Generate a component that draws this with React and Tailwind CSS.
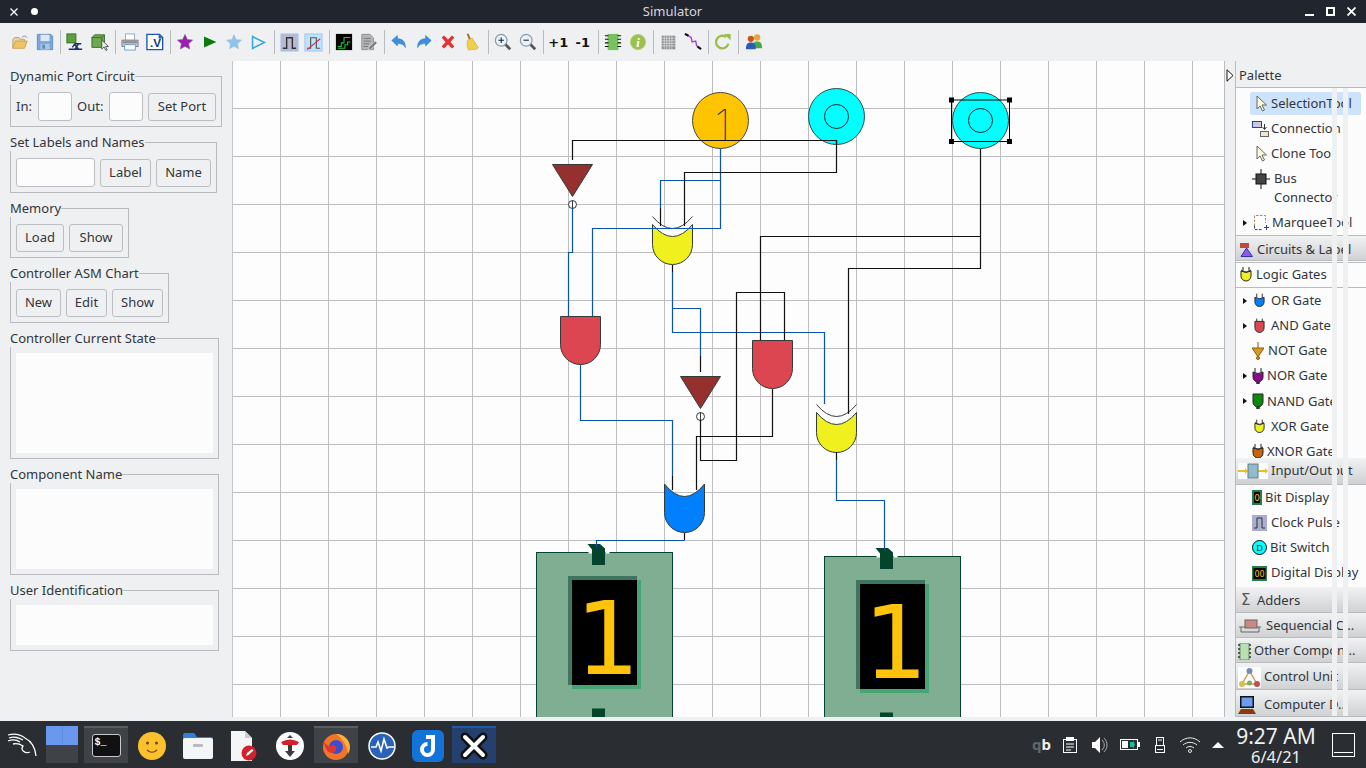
import React from "react";

const Sep = () => <div className="mx-[2.5px] h-[24px] w-px bg-[#b9bbbe]" />;

const Tool = ({ children }) => (
  <div className="flex h-[24px] w-[24.5px] items-center justify-center">{children}</div>
);

const Ico = ({ s = 18, children }) => (
  <svg width={s} height={s} viewBox="0 0 20 20">{children}</svg>
);

const star = "M10 1.5l2.6 5.6 6 .7-4.5 4.1 1.2 6L10 15l-5.3 2.9 1.2-6L1.400 7.800l6-.7z";

const toolbar = [
  [
    <Ico><path d="M2 17V7l2-2h5l1 2h5v3" fill="#e7d3a0" stroke="#b9a06a" /><path d="M2 17l3-8h13l-3 8z" fill="#eec468" stroke="#c9a04e" /><path d="M12 5c2-2 4-2 6 0" fill="none" stroke="#8a8a8a" /></Ico>,
    <Ico><path d="M1.500 1.500h15l2 2v15h-17z" fill="#7ba6d8" stroke="#5b8cc4" /><rect x="5" y="2" width="10" height="7" fill="#dbe8f5" /><rect x="5" y="12" width="10" height="6.500" fill="#a9c6e6" /><rect x="7" y="13" width="3" height="4.500" fill="#5b8cc4" /></Ico>,
  ],
  [
    <Ico><rect x="1" y="1" width="10" height="10" fill="#5ea13a" stroke="#2f6a20" /><path d="M7 16l3-4h7M3 18h15M9 12l5 6M14 12l-4 6" fill="none" stroke="#1f2f6b" strokeWidth="1.600" /></Ico>,
    <Ico><path d="M1 5l3-3h11v11l-3 3H1z" fill="#6fa84f" stroke="#3c6b2c" /><path d="M1 5h11v11M12 5l3-3" fill="none" stroke="#3c6b2c" /><path d="M12 8v10l2.500-2.500 2 4 1.500-.8-2-3.700h3.500z" fill="#eee" stroke="#555" /></Ico>,
  ],
  [
    <Ico><rect x="5" y="1" width="10" height="7" fill="#fff" stroke="#8fa8c4" /><path d="M1 8h18v7H1z" fill="#c9cbce" stroke="#777" /><rect x="2" y="9" width="16" height="2.500" fill="#8d9196" /><path d="M4 13h12v6H4z" fill="#fff" stroke="#5b9bd8" /></Ico>,
    <Ico><path d="M1 1.500h14l3.500 3.500v13.500H1z" fill="#fff" stroke="#1a56b0" strokeWidth="1.500" /><path d="M14 1.500l4.500 4.500h-4.500z" fill="#1a56b0" /><text x="4.500" y="15" fontSize="13" fontWeight="700" fontFamily="Liberation Sans" fill="#14367a">.V</text></Ico>,
  ],
  [
    <Ico><path d={star} fill="#9a1fb0" stroke="#6d6d6d" strokeWidth=".5" /></Ico>,
    <Ico s={16}><path d="M2.500 3L18 10 2.500 17z" fill="#0a7a0a" /></Ico>,
    <Ico><path d={star} fill="#8fc3ea" stroke="#b7c9d8" strokeWidth=".5" /></Ico>,
    <Ico s={17}><path d="M3 3L17 10 3 17z" fill="none" stroke="#36a9dc" strokeWidth="1.800" /></Ico>,
  ],
  [
    <Ico s={19}><rect x="1" y="1" width="18" height="18" fill="#b9b9d2" stroke="#9ec4f0" /><path d="M3 16h4V5h6v11h4" fill="none" stroke="#333" strokeWidth="1.500" /></Ico>,
    <Ico s={19}><rect x="1" y="1" width="18" height="18" fill="#bde3fb" stroke="#9ec4f0" /><path d="M3 16h4V5h6v11h4" fill="none" stroke="#555" strokeWidth="1.200" /><path d="M3.500 17.500L17 6" stroke="#e0303a" strokeWidth="1.200" /></Ico>,
  ],
  [
    <Ico><rect x="1" y="1" width="18" height="18" fill="#000" /><path d="M3 15h4v-4h3V5h7M3 17h8v-4h3v-3h3" fill="none" stroke="#22c33a" strokeWidth="1.200" /></Ico>,
    <Ico><path d="M2 1.500h9l4 4v13H2z" fill="#b5b6b8" stroke="#8a8b8d" /><path d="M4 6h8M4 9h8M4 12h6M4 15h5" stroke="#6f7072" /><path d="M10 16l7-7 2 2-7 7-3 1z" fill="#77787a" stroke="#eee" strokeWidth=".6" /></Ico>,
  ],
  [
    <Ico s={16}><path d="M1 8l7-6v4c6 0 10 3 10 11-2-4-5-5-10-5v3z" fill="#3f8fdc" stroke="#1f6bb5" strokeWidth=".6" /></Ico>,
    <Ico s={16}><path d="M19 8l-7-6v4C6 6 2 9 2 17c2-4 5-5 10-5v3z" fill="#3f8fdc" stroke="#1f6bb5" strokeWidth=".6" /></Ico>,
    <Ico s={16}><path d="M2 4.500L5 2l5 5 5-5 3 2.500-5 5.500 5 5.500-3 2.500-5-5-5 5-3-2.500 5-5.500z" fill="#e6322e" /></Ico>,
    <Ico><path d="M3 1l2-.500 3 7-2 1z" fill="#a86a2c" /><path d="M4 8l5-2.500 7 11-2 1.500-9 1c-2-4-2-8-1-11z" fill="#f0cf4e" stroke="#c9a32e" strokeWidth=".6" /></Ico>,
  ],
  [
    <Ico><path d="M12 12l6 6" stroke="#555" strokeWidth="3" /><circle cx="8" cy="8" r="6.500" fill="#e8f2fb" stroke="#8a9aa8" strokeWidth="1.300" /><path d="M5 8h6M8 5v6" stroke="#222" strokeWidth="1.200" /></Ico>,
    <Ico><path d="M12 12l6 6" stroke="#555" strokeWidth="3" /><circle cx="8" cy="8" r="6.500" fill="#e8f2fb" stroke="#8a9aa8" strokeWidth="1.300" /><path d="M5 8h6" stroke="#222" strokeWidth="1.200" /></Ico>,
  ],
  [
    <span className="font-['DejaVu_Sans'] text-[13px] font-bold leading-none text-[#111]">+1</span>,
    <span className="font-['DejaVu_Sans'] text-[13px] font-bold leading-none text-[#111]">-1</span>,
  ],
  [
    <Ico><rect x="4" y="1" width="12" height="18" fill="#76c25c" /><path d="M1 3h4M1 7h4M1 11h4M1 15h4M15 3h4M15 7h4M15 11h4M15 15h4" stroke="#111" strokeWidth="1.200" /></Ico>,
    <svg width="18" height="18" viewBox="0 0 20 20"><circle cx="10" cy="10" r="8.500" fill="#9cbf4f" stroke="#b8d47e" /><text x="10" y="15" textAnchor="middle" fontSize="14" fontWeight="700" fontStyle="italic" fontFamily="Liberation Serif" fill="#fff">i</text></svg>,
  ],
  [
    <Ico s={17}><path d="M2 2h16v16H2z" fill="#8f9092" /><path d="M2 5h16M2 8h16M2 11h16M2 14h16M5 2v16M8 2v16M11 2v16M14 2v16" stroke="#eee" strokeWidth=".7" /></Ico>,
    <Ico><path d="M3 2l5 3 1 5 4-1 1 5 3 3" fill="none" stroke="#a33be0" strokeWidth="1.500" /><path d="M1 1l4 2M15 15l4 3" stroke="#111" strokeWidth="2.400" /></Ico>,
  ],
  [
    <Ico><path d="M16 12a7 7 0 1 1-2.500-7.500" fill="none" stroke="#9cbc4a" strokeWidth="2.600" /><path d="M11 1h7.500v7z" fill="#9cbc4a" /></Ico>,
  ],
  [
    <Ico><circle cx="13.500" cy="5" r="3.500" fill="#f0a33a" /><path d="M8 17c0-6 2-7.500 5.500-7.500S19 11 19 17z" fill="#4aa84a" /><circle cx="6.500" cy="6.500" r="3.500" fill="#c9561e" /><path d="M1 18c0-6 2-7.500 5.500-7.500S12 12 12 18z" fill="#2e5bb8" /></Ico>,
  ],
];

const Btn = ({ w, children }) => (
  <button className={`flex h-[28px] items-center justify-center rounded-[3px] border border-[#bcbec1] bg-[#eff0f2] text-[13px] ${w}`}>
    {children}
  </button>
);

const Field = ({ className = "" }) => (
  <div className={`h-[29px] rounded-[3px] border border-[#bcbec1] bg-[#fcfcfc] ${className}`} />
);

const Group = ({ title, w, children }) => (
  <fieldset className={`border border-[#b9bbbe] ${w}`}>
    <legend className="-ml-px h-[18px] text-[13px] leading-[18px]">{title}</legend>
    {children}
  </fieldset>
);

const LeftPanel = () => (
  <div className="flex w-[233px] shrink-0 flex-col gap-[6px] border-r border-[#c4c6c9] pl-[10px] pt-[6px]">
    <Group title="Dynamic Port Circuit" w="w-[212px]">
      <div className="flex items-center gap-[5px] px-[5px] pb-[5px] pt-[7px] text-[13px]">
        <span className="w-[17px]">In:</span>
        <Field className="w-[34px]" />
        <span className="w-[27px]">Out:</span>
        <Field className="w-[34px]" />
        <Btn w="w-[68px]">Set Port</Btn>
      </div>
    </Group>
    <Group title="Set Labels and Names" w="w-[207px]">
      <div className="flex items-center gap-[5px] px-[5px] pb-[5px] pt-[7px]">
        <Field className="w-[79px]" />
        <Btn w="w-[51px]">Label</Btn>
        <Btn w="w-[55px]">Name</Btn>
      </div>
    </Group>
    <Group title="Memory" w="w-[119px]">
      <div className="flex h-[40px] items-start gap-[5px] px-[5px] pt-[7px] pb-[5px]">
        <Btn w="w-[48px]">Load</Btn>
        <Btn w="w-[54px]">Show</Btn>
      </div>
    </Group>
    <Group title="Controller ASM Chart" w="w-[159px]">
      <div className="flex h-[40px] items-start gap-[5px] px-[5px] pt-[7px] pb-[5px]">
        <Btn w="w-[45px]">New</Btn>
        <Btn w="w-[41px]">Edit</Btn>
        <Btn w="w-[51px]">Show</Btn>
      </div>
    </Group>
    <Group title="Controller Current State" w="w-[209px]">
      <div className="px-[5px] pb-[5px] pt-[6px]"><div className="h-[100px] bg-[#fcfcfc]" /></div>
    </Group>
    <Group title="Component Name" w="w-[209px]">
      <div className="px-[5px] pb-[5px] pt-[6px]"><div className="h-[80px] bg-[#fcfcfc]" /></div>
    </Group>
    <Group title="User Identification" w="w-[209px]">
      <div className="px-[5px] pb-[5px] pt-[6px]"><div className="h-[40px] bg-[#fcfcfc]" /></div>
    </Group>
  </div>
);

const GATE = "#333a3a";
const BLUE = "#0a52b4";

const Xor = ({ x, y }) => (
  <g stroke={GATE}>
    <path d={`M${x} ${y}Q${x + 20} ${y + 24} ${x + 40} ${y}V${y + 8}Q${x + 20} ${y + 32} ${x} ${y + 8}Z`} fill="#fdfdfd" stroke="none" />
    <path d={`M${x} ${y}Q${x + 20} ${y + 24} ${x + 40} ${y}`} fill="none" />
    <path d={`M${x} ${y + 8}Q${x + 20} ${y + 32} ${x + 40} ${y + 8}V${y + 28}A20 20 0 0 1 ${x} ${y + 28}Z`} fill="#f0f01e" />
  </g>
);

const And = ({ x, y }) => (
  <path d={`M${x} ${y}H${x + 40}V${y + 28}A20 20 0 0 1 ${x} ${y + 28}Z`} fill="#dc4650" stroke={GATE} />
);

const Not = ({ x, y }) => (
  <g stroke={GATE}>
    <path d={`M${x} ${y}H${x + 40}L${x + 20} ${y + 32}Z`} fill="#96302f" />
    <circle cx={x + 20} cy={y + 40} r="4" fill="#fdfdfd" />
    <path d={`M${x + 20} ${y + 36}V${y + 44}`} />
  </g>
);

const Display = ({ x, y }) => (
  <g>
    <rect x={x} y={y} width="136" height="190" fill="#7fae93" stroke="#04442c" />
    <path d={`M${x + 52} ${y}h3.500M${x + 69} ${y}h4`} stroke="#fdfdfd" strokeWidth="2" />
    <path d={`M${x + 51} ${y - 8.500}H${x + 63.500}L${x + 68.500} ${y - 4}V${y + 12.500}H${x + 55.500}V${y - 3}Z`} fill="#04442c" />
    <rect x={x + 55.500} y={y + 156} width="13" height="30" fill="#04442c" />
    <rect x={x + 35.500} y={y + 27.500} width="69" height="109" fill="#46a573" />
    <rect x={x + 31.500} y={y + 23.500} width="69" height="109" fill="#3f7660" />
    <rect x={x + 35.500} y={y + 27.500} width="65" height="105" fill="#000" />
    <text x={x + 39} y={y + 121.500} fontSize="101" fontFamily="DejaVu Sans" fill="#ffc30b">1</text>
  </g>
);

const Canvas = () => (
  <svg className="block h-[656px] w-[991px] shrink-0" viewBox="233 61 991 656">
    <defs>
      <pattern id="grid" x="280" y="108" width="48" height="48" patternUnits="userSpaceOnUse">
        <path d="M.5 0V48M0 .5H48" fill="none" stroke="#bebebe" />
      </pattern>
    </defs>
    <rect x="233" y="61" width="991" height="656" fill="#fdfdfd" />
    <rect x="233" y="61" width="991" height="656" fill="url(#grid)" />

    <circle cx="720.500" cy="120.500" r="28" fill="#ffc400" stroke="#4a4a3a" />
    <text x="722.500" y="140.500" textAnchor="middle" fontSize="44" fontWeight="100" fontFamily="Inter" fill="#111c33">1</text>
    <circle cx="836.500" cy="116.500" r="28" fill="#00ffff" stroke="#2a4a4a" />
    <circle cx="836.500" cy="116.500" r="12" fill="none" stroke="#1a2a2a" />
    <circle cx="980.500" cy="120.500" r="28" fill="#00ffff" stroke="#2a4a4a" />
    <circle cx="980.500" cy="120.500" r="12" fill="none" stroke="#1a2a2a" />

    <Not x={552.5} y={164.5} />
    <Not x={680.5} y={376.5} />
    <And x={560.5} y={316.5} />
    <And x={752.5} y={340.5} />
    <Xor x={652.5} y={216.5} />
    <Xor x={816.5} y={404.5} />
    <path d="M664.500 484Q684.500 509 704.500 484V512.500A20 20 0 0 1 664.500 512.500Z" fill="#0080ff" stroke={GATE} />

    <Display x={536.5} y={552.5} />
    <Display x={824.5} y={556.5} />

    <g fill="none" stroke={BLUE} strokeWidth="1.200">
      <path d="M720.500 148.500V228.500H592.500V316" />
      <path d="M720.500 180.500H660.500V208" />
      <path d="M572.500 208V252.500H568.500V316" />
      <path d="M580.500 365V420.500H672.500V476" />
      <path d="M672.500 272V332.500H824.500V404" />
      <path d="M672.500 308.500H700.500V356" />
      <path d="M684.500 540.500H596.500V547" />
      <path d="M836.500 460V500.500H884.500V550" />
    </g>
    <g fill="none" stroke="#111" strokeWidth="1.200">
      <path d="M572.500 160V140.500H836.500V172.500H684.500V226" />
      <path d="M836.500 140V144" />
      <path d="M660.500 208V226M672.500 265V272" />
      <path d="M980.500 149V268.500H848.500V414" />
      <path d="M980.500 236.500H760.500V340" />
      <path d="M784.500 340V292.500H736.500V460.500H700.500V420" />
      <path d="M772.500 389V436.500H696.500V490" />
      <path d="M700.500 356V372" />
      <path d="M672.500 476V490M684.500 533V540M836.500 452V460" />
    </g>

    <path d="M951.500 100V141.500H1009.500V100Z" fill="none" stroke="#000" />
    <g fill="#000">
      <rect x="949" y="97.500" width="5" height="5" />
      <rect x="1007" y="97.500" width="5" height="5" />
      <rect x="949" y="139" width="5" height="5" />
      <rect x="1007" y="139" width="5" height="5" />
    </g>
  </svg>
);

const Cursor = () => (
  <svg width="11" height="17" viewBox="0 0 11 17"><path d="M1 1v13l3-3 2.500 5 2-1-2.500-5h4.500z" fill="#fff8d8" stroke="#666" /></svg>
);

const GateIco = ({ fill, w = 11, bubble, cross }) => (
  <svg width={w} height="16" viewBox="0 0 12 16">
    <path d="M3 0v4M9 0v4" stroke="#222" />
    {cross && <path d="M1 3q5 4 10 0" fill="none" stroke="#222" />}
    <path d="M1 4q5 3 10 0v5a5 5 0 0 1-10 0z" fill={fill} stroke="#222" />
    {bubble && <circle cx="6" cy="15" r="1.300" fill={fill} stroke="#222" />}
  </svg>
);

const Arrow = () => (
  <span className="absolute left-[7px] top-1/2 -mt-[3px] h-0 w-0 border-y-[3px] border-l-[4px] border-y-transparent border-l-[#111]" />
);

const Item = ({ pad, arrow, selected, children, label, h = "h-[25px]" }) => (
  <div className={`relative flex items-center overflow-hidden whitespace-nowrap ${h} ${pad}`}>
    {selected && <span className="absolute inset-y-[1px] left-[14px] right-[5px] rounded-[2px] bg-[#cde3fb]" />}
    {arrow && <Arrow />}
    <span className="relative flex items-center">{children}</span>
    <span className="relative">{label}</span>
  </div>
);

const Drawer = ({ pad, children, label, h }) => (
  <div className={`flex items-center overflow-hidden whitespace-nowrap border-b border-[#b9bbbe] bg-linear-to-b from-[#f1f2f3] to-[#cfd1d3] ${h} ${pad}`}>
    <span className="flex items-center">{children}</span>
    <span>{label}</span>
  </div>
);

const Palette = () => (
  <div className="relative flex w-[142px] shrink-0 text-[13px]">
    <div className="w-[12px] shrink-0 border-x border-[#b9bbbe] pt-[8px] pl-[1px]">
      <svg width="8" height="13" viewBox="0 0 8 13"><path d="M1 .8L7 6.500 1 12.200z" fill="#fff" stroke="#111" /></svg>
    </div>
    <div className="min-w-0 flex-1 bg-[#fcfcfc]">
      <div className="flex h-[27px] items-center border-b border-[#b9bbbe] bg-[#eff0f2] pl-[3px] pt-[4px]">Palette</div>
      <div className="h-[148px] overflow-hidden border-b border-[#b9bbbe] pt-[3px]">
        <Item pad="pl-[20px] gap-[4px]" selected label="SelectionTool"><Cursor /></Item>
        <Item pad="pl-[16px] gap-[2px]" label="Connection">
          <svg width="17" height="16" viewBox="0 0 17 16"><rect x=".5" y=".5" width="9" height="6" fill="#c8cbe0" stroke="#2a3f9a" /><rect x="8.500" y="10.500" width="8" height="5" fill="#efe8d0" stroke="#666" /><path d="M12.500 3v5M10.500 6l2 2.500 2-2.500" fill="none" stroke="#333" /></svg>
        </Item>
        <Item pad="pl-[20px] gap-[4px]" label="Clone Tool"><Cursor /></Item>
        <div className="relative flex h-[44px] items-center pl-[16px] gap-[4px] whitespace-nowrap">
          <svg className="-mt-[18px]" width="18" height="20" viewBox="0 0 18 20"><path d="M9 0v20M0 10h18" stroke="#111" /><rect x="4" y="5" width="10" height="10" fill="#444" stroke="#111" /></svg>
          <span className="leading-[19px]">Bus<br />Connector</span>
        </div>
        <Item pad="pl-[18px] gap-[3px]" arrow label="MarqueeTool">
          <svg width="15" height="15" viewBox="0 0 15 15"><path d="M.5 11V.5h11V8" fill="none" stroke="#a88a3a" strokeDasharray="2.500 1.500" /><path d="M.5 11v3.500h8" fill="none" stroke="#2a3f9a" strokeDasharray="2.500 1.500" /><path d="M12.500 10v5M10 12.500h5" stroke="#2a3f9a" /></svg>
        </Item>
      </div>
      <Drawer h="h-[25px]" pad="pl-[4px] gap-[4px] pt-[4px]" label="Circuits & Label">
        <svg width="13" height="14" viewBox="0 0 13 14"><rect y="0" width="9" height="5" fill="#c0483c" /><path d="M6.500 5l6 8.500H1z" fill="#8a5cf0" stroke="#3a2ab0" /></svg>
      </Drawer>
      <div className="mt-[1px] flex h-[26px] items-center gap-[4px] border-t border-b border-[#b9bbbe] pl-[4px]">
        <GateIco fill="#f0f01e" w={12} cross />
        <span>Logic Gates</span>
      </div>
      <div className="h-[170px] overflow-hidden">
        <Item h="h-[25.200px]" pad="pl-[18px] gap-[6px]" arrow label="OR Gate"><GateIco fill="#0080ff" /></Item>
        <Item h="h-[25.200px]" pad="pl-[18px] gap-[6px]" arrow label="AND Gate">
          <svg width="11" height="16" viewBox="0 0 12 16"><path d="M3 0v3M9 0v3" stroke="#222" /><path d="M1 3h10v7a5 5 0 0 1-10 0z" fill="#dc4650" stroke="#222" /></svg>
        </Item>
        <Item h="h-[25.200px]" pad="pl-[16px] gap-[4px]" label="NOT Gate">
          <svg width="12" height="18" viewBox="0 0 12 18"><path d="M6 0v6" stroke="#8a5a10" /><path d="M0 6h12L6 15z" fill="#d89a20" stroke="#8a5a10" /><circle cx="6" cy="16" r="1.500" fill="#d89a20" stroke="#8a5a10" /></svg>
        </Item>
        <Item h="h-[25.200px]" pad="pl-[16px] gap-[3px]" arrow label="NOR Gate"><GateIco fill="#8a0a8a" w={12} bubble /></Item>
        <Item h="h-[25.200px]" pad="pl-[16px] gap-[3px]" arrow label="NAND Gate">
          <svg width="12" height="16" viewBox="0 0 12 16"><path d="M1 1h10v8a5 5 0 0 1-10 0z" fill="#0a8a0a" stroke="#222" /><circle cx="6" cy="15" r="1.300" fill="#0a8a0a" stroke="#222" /></svg>
        </Item>
        <Item h="h-[25.200px]" pad="pl-[18px] gap-[6px]" label="XOR Gate"><GateIco fill="#f0f01e" cross /></Item>
        <Item h="h-[25.200px]" pad="pl-[16px] gap-[3px]" label="XNOR Gate"><GateIco fill="#c8640a" w={12} cross /></Item>
      </div>
      <Drawer h="h-[27px]" pad="pl-[2px] gap-[3px]" label="Input/Output">
        <svg width="30" height="16" viewBox="0 0 30 16"><rect width="30" height="16" fill="#fcfcfc" /><path d="M0 7h7V5l3 3-3 3V9H0zM20 7h7V5l3 3-3 3V9h-7z" fill="#e8c020" /><rect x="10" y="1" width="10" height="14" fill="#8fbccc" stroke="#607a88" /></svg>
      </Drawer>
      <div className="h-[102px] overflow-hidden">
        <Item h="h-[25.200px]" pad="pl-[16px] gap-[3px]" label="Bit Display">
          <svg width="10" height="15" viewBox="0 0 10 15"><rect width="10" height="15" fill="#2a7a50" /><rect x="2" y="2" width="6" height="11" fill="#000" /><text x="5" y="11" textAnchor="middle" fontSize="9" fontFamily="DejaVu Sans" fill="#ffc30b">0</text></svg>
        </Item>
        <Item h="h-[25.200px]" pad="pl-[16px] gap-[4px]" label="Clock Pulse">
          <svg width="15" height="16" viewBox="0 0 15 16"><rect width="15" height="16" fill="#a9aed0" /><path d="M2 13h3V3h5v10h3" fill="none" stroke="#333" /></svg>
        </Item>
        <Item h="h-[25.200px]" pad="pl-[16px] gap-[3px]" label="Bit Switch">
          <svg width="15" height="15" viewBox="0 0 15 15"><circle cx="7.500" cy="7.500" r="7" fill="#00ffff" stroke="#111" /><text x="7.500" y="11" textAnchor="middle" fontSize="9" fontFamily="Liberation Serif" fill="#111">D</text></svg>
        </Item>
        <Item h="h-[25.200px]" pad="pl-[16px] gap-[4px]" label="Digital Display">
          <svg width="15" height="15" viewBox="0 0 15 15"><rect width="15" height="15" fill="#2a7a50" /><rect x="1.500" y="2" width="12" height="11" fill="#000" /><text x="7.500" y="11" textAnchor="middle" fontSize="8" fontFamily="DejaVu Sans" fill="#ffc30b">00</text></svg>
        </Item>
      </div>
      <Drawer h="h-[26px]" pad="pl-[5px] gap-[5px] pt-[2px]" label="Adders">
        <span className="w-[11px] font-['DejaVu_Sans'] text-[15px] leading-none text-[#555]">Σ</span>
      </Drawer>
      <Drawer h="h-[25px]" pad="pl-[3px] gap-[5px] pt-[2px]" label="Sequencial C...">
        <svg width="22" height="14" viewBox="0 0 22 14"><path d="M0 8h22M2 8v5h18V8" fill="none" stroke="#666" /><rect x="6" y="1" width="12" height="8" fill="#c88a80" stroke="#666" /></svg>
      </Drawer>
      <Drawer h="h-[25px]" pad="pl-[2px] gap-[3px] pt-[2px]" label="Other Compon...">
        <svg width="13" height="17" viewBox="0 0 13 17"><rect x="2" y="0" width="9" height="17" fill="#b8e0b0" stroke="#6a8a6a" /><path d="M0 2h2M0 6h2M0 10h2M0 14h2M11 2h2M11 6h2M11 10h2M11 14h2" stroke="#333" strokeWidth="1.400" /></svg>
      </Drawer>
      <Drawer h="h-[27px]" pad="pl-[2px] gap-[3px] pt-[2px]" label="Control Unit">
        <svg width="23" height="21" viewBox="0 0 23 21"><rect width="23" height="21" fill="#fcfcfc" /><path d="M11.500 4L4 17h15z" fill="none" stroke="#c8a050" strokeWidth="1.500" /><circle cx="11.500" cy="4" r="3" fill="#7a8ab8" /><circle cx="4" cy="17" r="3" fill="#d8c050" /><circle cx="19" cy="17" r="3" fill="#c05050" /><circle cx="11.500" cy="16" r="2.500" fill="#80a860" /></svg>
      </Drawer>
      <Drawer h="h-[27px]" pad="pl-[2px] gap-[8px] pt-[4px]" label="Computer D...">
        <svg width="18" height="18" viewBox="0 0 18 18"><rect x="2" y="0" width="14" height="12" fill="#111" /><rect x="3.500" y="1.500" width="11" height="9" fill="#6a9cf0" /><path d="M0 18l3-5h12l3 5z" fill="#8a3a10" /></svg>
      </Drawer>
    </div>
    <div className="absolute bottom-[1px] left-[108px] top-[27px] w-[5px] bg-[#eff0f2]" />
    <div className="absolute bottom-[1px] left-[119px] top-[27px] w-[5px] bg-[#eff0f2]" />
  </div>
);

const Slot = ({ active, blue, children }) => (
  <div className={`mx-px flex h-[37px] w-[44px] items-center justify-center border-t-2 ${blue ? "border-[#2358a8] bg-[#24406e]" : active ? "border-[#5a5d60] bg-[#3f4347]" : "border-transparent"}`}>
    {children}
  </div>
);

const Taskbar = () => (
  <div className="flex h-[47px] items-center bg-[#2a2e32] pl-[7px] text-[#eff0f1]">
    <svg width="30" height="26" viewBox="0 0 30 26" fill="none" stroke="#fff" strokeWidth="1.300">
      <path d="M1 3C8 1 14 3 18 6C24 9 28 14 29 24" />
      <path d="M2 6C8 4 12 6 16 8" />
      <path d="M1 9C6 7 10 8 13 10" />
      <path d="M6 12C10 11 13 12 16 14C13 18 18 22 23 20" />
    </svg>
    <div className="ml-[9px] flex h-[37px] w-[32px] flex-col">
      <div className="flex h-[19px] gap-px bg-[#5f8ae0]">
        <div className="flex-1 bg-[#6a98ef]" />
        <div className="flex-1 bg-[#6a98ef]" />
      </div>
      <div className="flex-1 bg-[#3f4347]" />
    </div>
    <div className="ml-[5px] flex">
      <Slot active>
        <div className="flex h-[23px] w-[29px] items-start rounded-[3px] border border-[#c8c8c8] bg-[#111] pl-[2px] pt-[1px] font-['Liberation_Mono'] text-[10px] font-bold leading-[14px] text-white">$_</div>
      </Slot>
      <Slot>
        <svg width="28" height="28" viewBox="0 0 28 28"><circle cx="14" cy="14" r="14" fill="#fdc02f" /><circle cx="9.500" cy="11" r="1.500" fill="#6b4a10" /><circle cx="18.500" cy="11" r="1.500" fill="#6b4a10" /><path d="M9 18c3 3 7 3 10 0" fill="none" stroke="#6b4a10" strokeWidth="1.200" /></svg>
      </Slot>
      <Slot>
        <svg width="30" height="26" viewBox="0 0 30 26"><path d="M0 2q0-2 2-2h9l3 4h14q2 0 2 2v3H0z" fill="#2f7fe0" /><rect y="5" width="30" height="21" rx="2" fill="#f4f5f6" /><rect x="10" y="11" width="10" height="3" rx="1" fill="#bbb" /></svg>
      </Slot>
      <Slot>
        <svg width="28" height="30" viewBox="0 0 28 30"><path d="M1 0h14l7 7v23H1z" fill="#f5f5f5" /><path d="M15 0l7 7h-7z" fill="#ccc" /><circle cx="19" cy="22" r="7.500" fill="#d3202a" /><path d="M16 25l1-3 5-4 1.500 1.500-5 4.500z" fill="#fff" /></svg>
      </Slot>
      <Slot>
        <svg width="28" height="28" viewBox="0 0 28 28"><circle cx="14" cy="14" r="14" fill="#fff" /><path d="M5 10q9-5 18 0l-2 3H7z" fill="#d3202a" /><path d="M12 13h4v6h3l-5 6-5-6h3z" fill="#3a3d40" /><path d="M14 3l-3 3h6z" fill="#3a3d40" /></svg>
      </Slot>
      <Slot active>
        <svg width="28" height="28" viewBox="0 0 28 28"><circle cx="14" cy="15" r="13" fill="#f0752a" /><path d="M14 2c8 0 14 6 14 13 0 3-1 5-2 7-1-8-4-14-12-20z" fill="#fbb03b" /><circle cx="14" cy="15" r="7" fill="#3a4fd0" /><path d="M2 10c3 5 8 4 10 3 4 2 2 8-2 8C6 21 3 17 2 10z" fill="#e2362e" /></svg>
      </Slot>
      <Slot>
        <svg width="28" height="28" viewBox="0 0 28 28"><circle cx="14" cy="14" r="13" fill="#2a62b8" stroke="#fff" strokeWidth="1.500" /><path d="M3 15h5l2-5 3 9 3-12 3 9 2-1h5" fill="none" stroke="#fff" strokeWidth="1.600" /></svg>
      </Slot>
      <Slot>
        <svg width="32" height="32" viewBox="0 0 32 32"><rect width="32" height="32" rx="6" fill="#1273d8" /><path d="M21 7v12.500a5.500 5.500 0 1 1-5.500-5.500" fill="none" stroke="#fff" strokeWidth="4" /><path d="M14 7h9" stroke="#fff" strokeWidth="4" /></svg>
      </Slot>
      <Slot blue>
        <svg width="28" height="28" viewBox="0 0 28 28"><path d="M5 5l18 18M23 5L5 23" stroke="#111" strokeWidth="9" strokeLinecap="round" /><path d="M5 5l18 18M23 5L5 23" stroke="#fff" strokeWidth="4" strokeLinecap="round" /></svg>
      </Slot>
    </div>
    <div className="ml-auto flex items-center pr-[11px]">
      <span className="w-[17px] text-[15px] font-bold leading-none"><span className="text-[#63666a]">q</span>b</span>
      <svg className="ml-[14px]" width="14" height="16" viewBox="0 0 14 16"><rect x=".5" y="2.500" width="13" height="13" fill="none" stroke="#fff" /><rect x="3" y="0" width="8" height="4" fill="#fff" /><path d="M3 7h8M3 10h8M3 13h5" stroke="#fff" /></svg>
      <svg className="ml-[15px]" width="16" height="16" viewBox="0 0 16 16"><path d="M0 5h3l5-5v16l-5-5H0z" fill="#fff" /><path d="M10 3c3 3 3 7 0 10M12 1c4 4 4 10 0 14" fill="none" stroke="#aaa" /></svg>
      <svg className="ml-[12px]" width="20" height="11" viewBox="0 0 20 11"><rect x=".5" y=".5" width="17" height="10" fill="none" stroke="#fff" /><rect x="18" y="3" width="2" height="5" fill="#fff" /><rect x="2" y="2" width="6" height="7" fill="#fff" /><path d="M10 3h3V1l2 4.500-2 4.500V8h-3z" fill="#1abc9c" /></svg>
      <svg className="ml-[15px]" width="10" height="16" viewBox="0 0 10 16"><rect x="1.500" y=".5" width="7" height="8" fill="none" stroke="#fff" /><rect x="3.500" y="2" width="1" height="2" fill="#fff" /><rect x="5.500" y="2" width="1" height="2" fill="#fff" /><rect x=".5" y="8.500" width="9" height="7" fill="none" stroke="#fff" /><rect x="2" y="12" width="6" height="1" fill="#fff" /></svg>
      <svg className="ml-[14px]" width="22" height="16" viewBox="0 0 22 16" fill="none" stroke="#e8e8e8"><path d="M1 5c6-5.500 14-5.500 20 0M4 8c4-3.500 10-3.500 14 0M7 11c2.500-2 5.500-2 8 0" /><circle cx="11" cy="14" r="1.500" /></svg>
      <svg className="ml-[11px]" width="12" height="6" viewBox="0 0 12 6"><path d="M0 6L6 0l6 6z" fill="#fff" /></svg>
      <div className="ml-[6px] flex w-[92px] flex-col items-center">
        <span className="h-[23px] text-[21px] leading-[23px]">9:27 AM</span>
        <span className="h-[17px] text-[16.500px] leading-[17px]">6/4/21</span>
      </div>
      <div className="ml-[10px] flex h-[24px] w-[23px] items-end border border-white px-[1px] pb-[3px]">
        <div className="h-px w-full bg-white" />
      </div>
    </div>
  </div>
);

export default function App() {
  return (
    <div className="flex h-screen flex-col overflow-hidden bg-[#eff0f2] font-['Noto_Sans','Open_Sans',sans-serif] text-[#31363b]">
      <div className="flex h-[23px] items-center bg-[#21252e] text-[13px] text-[#d5d7da]">
        <div className="flex w-[45px] items-center gap-[13px] pl-[10px]">
          <svg width="8" height="8" viewBox="0 0 8 8"><path d="M.5.5l7 7M7.500.5l-7 7" stroke="#fff" strokeWidth="1.300" /></svg>
          <span className="h-[7px] w-[7px] rounded-full bg-white" />
        </div>
        <div className="flex-1 text-center">Simulator</div>
        <div className="flex w-[66px] items-center gap-[12px] pl-[5px]">
          <svg width="9" height="9" viewBox="0 0 9 9"><rect y="7" width="9" height="2" fill="#fff" /></svg>
          <svg width="9" height="9" viewBox="0 0 9 9"><rect x="1" y="1" width="7" height="7" fill="none" stroke="#fff" strokeWidth="2" /></svg>
          <svg width="9" height="9" viewBox="0 0 9 9"><path d="M.5.5l8 8M8.500.5l-8 8" stroke="#fff" strokeWidth="1.800" /></svg>
        </div>
      </div>

      <div className="flex h-[38px] items-center pl-[8px]">
        {toolbar.map((group, i) => (
          <React.Fragment key={i}>
            {i > 0 && <Sep />}
            {group.map((icon, j) => <Tool key={j}>{icon}</Tool>)}
          </React.Fragment>
        ))}
      </div>

      <div className="flex h-[656px]">
        <LeftPanel />
        <Canvas />
        <Palette />
      </div>

      <div className="h-[4px]" />
      <Taskbar />
    </div>
  );
}
